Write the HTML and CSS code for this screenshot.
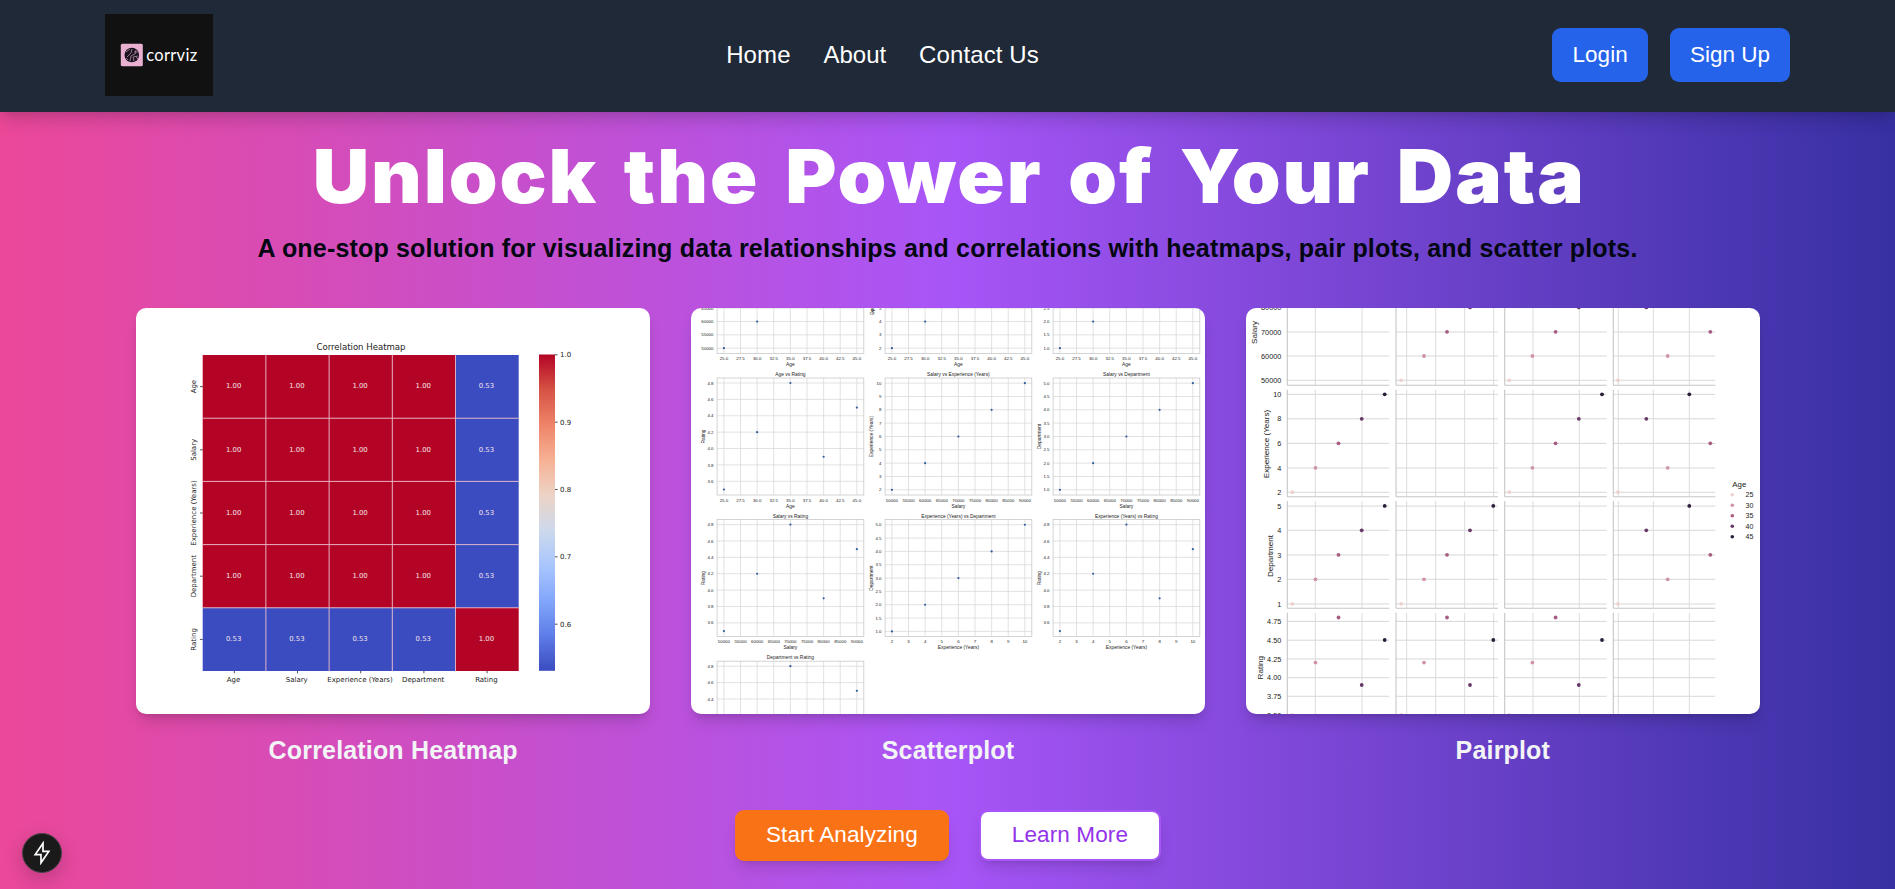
FILE: index.html
```html
<!DOCTYPE html>
<html lang="en">
<head>
<meta charset="utf-8">
<title>corrviz</title>
<link rel="stylesheet" href="styles.css">
</head>
<body>
<header class="header">
  <svg class="logo" viewBox="105 14 108 82">
    <rect x="105" y="14" width="108" height="82" fill="#111"/>
    <rect x="120.8" y="43.8" width="22" height="22.4" rx="1.5" fill="#eab0d2"/>
    <ellipse cx="131.8" cy="55" rx="7.3" ry="7.3" fill="#1c1520"/>
    <path d="M126 52l4-3M127 57l4-4 1-4M130 61l1-5 4-2 1-4M134 61l-1-4 5-1M136 57l2 2M128 60l-2-2M134 52l4 0" stroke="#b78aa8" stroke-width=".8" fill="none"/>
    <text class="logo-text" x="146.2" y="61.3" textLength="51">corrviz</text>
  </svg>
  <nav class="nav"><a class="nav-home">Home</a><a class="nav-about">About</a><a class="nav-contact">Contact Us</a></nav>
  <div class="auth"><a class="auth-btn">Login</a><a class="auth-btn">Sign Up</a></div>
</header>
<main class="hero">
  <h1 class="title">Unlock the Power of Your Data</h1>
  <p class="subtitle">A one-stop solution for visualizing data relationships and correlations with heatmaps, pair plots, and scatter plots.</p>
  <section class="cards">
    <figure class="card"><svg class="plot" id="heatmap" viewBox="136 308 514.33 406"></svg><figcaption class="caption">Correlation Heatmap</figcaption></figure>
    <figure class="card"><svg class="plot" id="scatter" viewBox="691.2 308 514.33 406"></svg><figcaption class="caption">Scatterplot</figcaption></figure>
    <figure class="card"><svg class="plot" id="pairplot" viewBox="1246 308 514.33 406"></svg><figcaption class="caption">Pairplot</figcaption></figure>
  </section>
  <div class="actions"><a class="btn btn-primary">Start Analyzing</a><a class="btn btn-secondary">Learn More</a></div>
</main>
<div class="badge">
  <svg width="20" height="24" viewBox="0 0 20 24"><path d="M11 2.2L3.2 13.6H9V21.8L16.8 10.4H11Z" fill="none" stroke="#fff" stroke-width="1.7" stroke-linejoin="miter"/></svg>
</div>
<script src="script.js"></script>
</body>
</html>
```
FILE: styles.css
```css
* { box-sizing: border-box; }
body {
  margin: 0;
  height: 889px;
  overflow: hidden;
  background: #fff;
  font-family: "Liberation Sans", Arial, sans-serif;
}
.header {
  position: relative;
  z-index: 1;
  height: 112px;
  padding: 0 105px;
  display: grid;
  grid-template-columns: 1fr auto 1fr;
  align-items: center;
  background: #1f2937;
  box-shadow: 0 10px 15px -3px rgba(0, 0, 0, .1), 0 4px 6px -4px rgba(0, 0, 0, .1), 0 8px 20px rgba(0, 0, 0, .07);
}
.logo { display: block; width: 108px; height: 82px; margin-top: -2px; }
.logo-text { font: 16.5px Lato, sans-serif; fill: #fff; }
.nav {
  display: flex;
  gap: 33px;
  padding: 0 0 2px;
  font-size: 24px;
  line-height: 36px;
  color: #fff;
  transform: translateX(-65px);
}
.nav-home { letter-spacing: .1px; }
.nav-about { letter-spacing: -.05px; }
.nav-contact { letter-spacing: .1px; }
.auth { display: flex; justify-content: flex-end; gap: 22px; padding-bottom: 2px; }
.auth-btn {
  height: 54px;
  padding: 0 20px 0 20.3px;
  border-radius: 9px;
  background: #2563eb;
  color: #fff;
  font-size: 22.5px;
  line-height: 53px;
}
.hero {
  height: 777px;
  padding-top: 22px;
  background: linear-gradient(to right, #ec4899, #a855f7, #3730a3);
  text-align: center;
}
.title {
  width: fit-content;
  margin: 0 auto;
  height: 85px;
  color: #fff;
  font: 900 74.5px/85px Inter, sans-serif;
  letter-spacing: 1.8px;
  word-spacing: 8px;
  white-space: nowrap;
  transform: translateX(2px) scaleX(1.05);
}
.subtitle {
  margin: 14px 0 0;
  height: 31px;
  color: #030712;
  font-size: 25px;
  line-height: 31px;
  font-weight: 700;
  letter-spacing: .18px;
  white-space: nowrap;
}
.cards {
  display: grid;
  grid-template-columns: repeat(3, 514.33px);
  justify-content: space-between;
  margin: 44px 135px 0 136px;
}
.card { margin: 0; }
.plot {
  display: block;
  width: 100%;
  height: 406px;
  border-radius: 10px;
  background: #fff;
  box-shadow: 0 10px 15px -3px rgba(0, 0, 0, .15), 0 4px 6px -4px rgba(0, 0, 0, .15);
}
.caption {
  margin-top: 18px;
  color: #f3f4f6;
  font-size: 25px;
  line-height: 36px;
  font-weight: 700;
  letter-spacing: .17px;
}
.actions { display: flex; justify-content: center; gap: 30px; margin-top: 42px; padding-left: 1px; }
.btn {
  height: 51px;
  padding: 0 31px;
  border-radius: 9px;
  font-size: 22.5px;
  line-height: 50px;
  letter-spacing: .12px;
  box-shadow: 0 10px 15px -3px rgba(0, 0, 0, .12), 0 4px 6px -4px rgba(0, 0, 0, .12);
}
.btn-primary { background: #f97316; color: #fff; }
.btn-secondary { background: #fff; border: 2px solid #a855f7; color: #9333ea; line-height: 46px; }
.badge {
  position: absolute;
  left: 22px;
  top: 833px;
  width: 40px;
  height: 40px;
  border-radius: 50%;
  border: 1.5px solid #4a4248;
  background: #1a1a1a;
  box-shadow: 0 6px 20px rgba(0, 0, 0, .2);
  display: flex;
  align-items: center;
  justify-content: center;
}
.heat-text { font-family: "DejaVu Sans", sans-serif; }
.plot-text { font-family: "Liberation Sans", Arial, sans-serif; }
```
FILE: script.js
```js
const NS = "http://www.w3.org/2000/svg";

function el(parent, tag, attrs, text) {
  const n = document.createElementNS(NS, tag);
  for (const k in attrs) n.setAttribute(k, attrs[k]);
  if (text !== undefined) n.textContent = text;
  parent.appendChild(n);
  return n;
}

function label(svg, cls, text, x, y, size, opt = {}) {
  if (y < 302 || y > 719) return;
  const a = { class: cls, x, y: y + size * 0.36, "font-size": size, "text-anchor": opt.anchor || "middle", fill: opt.fill || "#222" };
  if (opt.rotate) a.transform = `rotate(-90 ${x} ${y})`;
  if (opt.width) a.textLength = opt.width;
  el(svg, "text", a, text);
}

function line(svg, x1, y1, x2, y2, stroke, w) {
  el(svg, "line", { x1, y1, x2, y2, stroke, "stroke-width": w });
}

function drawHeatmap() {
  const s = document.getElementById("heatmap");
  const T = "heat-text";
  const names = ["Age", "Salary", "Experience (Years)", "Department", "Rating"];
  const x0 = 202.7, y0 = 355, c = 63.2;
  label(s, T, "Correlation Heatmap", 361, 347.2, 8.6, { width: 89 });
  for (let r = 0; r < 5; r++) for (let k = 0; k < 5; k++) {
    const high = (r === 4) === (k === 4);
    el(s, "rect", { x: x0 + k * c, y: y0 + r * c, width: c, height: c, fill: high ? "#b40426" : "#3b4cc0" });
    label(s, T, high ? "1.00" : "0.53", x0 + (k + .49) * c, y0 + (r + .49) * c, 6.9, { fill: "#f3e4ea" });
  }
  for (let i = 1; i < 5; i++) {
    line(s, x0 + i * c, y0, x0 + i * c, y0 + 5 * c, "#e6b8c6", .9);
    line(s, x0, y0 + i * c, x0 + 5 * c, y0 + i * c, "#e6b8c6", .9);
  }
  names.forEach((n, i) => {
    const m = (i + .5) * c;
    line(s, x0 + m, 671, x0 + m, 673.3, "#222", .8);
    line(s, 200, y0 + m, x0, y0 + m, "#222", .8);
    const w = i === 2 ? 65.5 : undefined;
    label(s, T, n, x0 + m - .7, 679.2, 7, { width: w });
    label(s, T, n, 193, y0 + m, 7, { width: w, rotate: true });
  });
  const g = el(s, "linearGradient", { id: "coolwarm", x1: 0, y1: 0, x2: 0, y2: 1 });
  ["#b40426", "#d65244", "#ee8468", "#f7b194", "#ecd3c5", "#cdd9ec", "#a9c6fd", "#82a6fb", "#5e7de7", "#3b4cc0"]
    .forEach((col, i) => el(g, "stop", { offset: i / 9, "stop-color": col }));
  el(s, "rect", { x: 539, y: 354.5, width: 16, height: 316.3, fill: "url(#coolwarm)" });
  ["1.0", "0.9", "0.8", "0.7", "0.6"].forEach((t, i) => {
    const y = 354.8 + i * 67.35;
    line(s, 555, y, 557.6, y, "#222", .8);
    label(s, T, t, 560, y, 7, { anchor: "start" });
  });
}

const range = (n, f) => Array.from({ length: n }, (_, i) => f(i));
const axes = {
  Age: { t: range(9, i => (25 + 2.5 * i).toFixed(1)), p: [0, 2, 4, 6, 8] },
  Salary: { t: range(9, i => String(50000 + 5000 * i)), p: [0, 2, 4, 6, 8] },
  "Experience (Years)": { t: range(9, i => String(2 + i)), p: [0, 2, 4, 6, 8] },
  Department: { t: range(9, i => (1 + .5 * i).toFixed(1)), p: [0, 2, 4, 6, 8] },
  Rating: { t: range(7, i => (3.6 + .2 * i).toFixed(1)), p: [-.5, 3, 6, 1.5, 4.5] }
};

function drawScatter() {
  const s = document.getElementById("scatter");
  const T = "plot-text";
  const cols = [717.3, 885.3, 1053.3];
  const plots = [
    ["Age", "Salary"], ["Age", "Experience (Years)"], ["Age", "Department"],
    ["Age", "Rating"], ["Salary", "Experience (Years)"], ["Salary", "Department"],
    ["Salary", "Rating"], ["Experience (Years)", "Department"], ["Experience (Years)", "Rating"],
    ["Department", "Rating"]
  ];
  plots.forEach(([xn, yn], i) => {
    const x0 = cols[i % 3];
    const top = 378 + (Math.floor(i / 3) - 1) * 141.6;
    const xa = axes[xn], ya = axes[yn];
    const px = v => x0 + 6.8 + v * 16.62;
    const rating = yn === "Rating";
    const py = v => rating ? top + 103.3 - v * 16.38 : top + 111.8 - v * 13.33;
    xa.t.forEach((t, k) => {
      line(s, px(k), top, px(k), top + 117, "#d6d6d6", .7);
      if (i < 9) label(s, T, t, px(k), top + 122.3, 4.4);
    });
    ya.t.forEach((t, k) => {
      line(s, x0, py(k), x0 + 146.7, py(k), "#d6d6d6", .7);
      label(s, T, t, x0 - 3.6, py(k), 4.4, { anchor: "end" });
    });
    el(s, "rect", { x: x0, y: top, width: 146.7, height: 117, fill: "none", stroke: "#c8c8c8", "stroke-width": .8 });
    label(s, T, `${xn} vs ${yn}`, x0 + 73.3, top - 3.8, 4.9);
    label(s, T, xn, x0 + 73.3, top + 128, 4.9);
    if (i === 1) label(s, T, yn, x0 - 13, 303, 4.9, { rotate: true, width: 24 });
    else if (i > 2 && i < 9) label(s, T, yn, x0 - 13.7, top + 58.5, 4.9, { rotate: true });
    xa.p.forEach((v, k) => el(s, "circle", { cx: px(v), cy: py(ya.p[k]), r: 1.1, fill: "#2f5d9e" }));
  });
}

function drawPairplot() {
  const s = document.getElementById("pairplot");
  const T = "plot-text";
  const hues = ["#edd1d1", "#d093a6", "#a85c7f", "#663a68", "#2a1e3b"];
  const cols = [
    { x: 1287.3, g: [1315.3, 1362], p: [1292.3, 1315.5, 1338.5, 1361.7, 1384.7] },
    { x: 1396, g: [1406.7, 1435.7, 1464.7, 1493.7], p: [1401, 1424, 1447, 1470, 1493.3] },
    { x: 1504.7, g: [1533, 1579.3], p: [1509.3, 1532.4, 1555.6, 1578.8, 1602] },
    { x: 1613.3, g: [1618.3, 1653.3, 1689.3], p: [1618, 1667.7, 1710.3, 1646.3, 1689.3] }
  ];
  const rows = [
    { n: "Salary", lx: 1254, ly: 332.5, top: 279, bot: 385.3, g: [380.3, 356, 332, 307.6], t: ["50000", "60000", "70000", "80000"], p: [380.3, 356, 331.8, 307.4, 283] },
    { n: "Experience (Years)", lx: 1266, ly: 444, top: 389.7, bot: 496.7, g: [492.3, 468, 443.4, 418.8, 394.4], t: ["2", "4", "6", "8", "10"], p: [492.2, 467.8, 443.3, 418.8, 394.3] },
    { n: "Department", lx: 1270.3, ly: 556, top: 501, bot: 608.3, g: [604, 579.3, 555, 530.3, 506.1], t: ["1", "2", "3", "4", "5"], p: [603.8, 579.3, 554.8, 530.3, 505.9] },
    { n: "Rating", lx: 1260, ly: 667.7, top: 612.7, bot: 720, g: [715, 696.3, 677.7, 659, 640.2, 621.4], t: ["3.50", "3.75", "4.00", "4.25", "4.50", "4.75"], p: [715, 662.6, 617.5, 685, 640] }
  ];
  rows.forEach((r, ri) => {
    label(s, T, r.n, r.lx, r.ly, 8.1, { rotate: true });
    r.t.forEach((t, k) => label(s, T, t, 1281.3, r.g[k], 7.3, { anchor: "end" }));
    cols.forEach((c, ci) => {
      r.g.forEach(y => line(s, c.x, y, c.x + 102, y, "#d4d4d4", .9));
      c.g.forEach(x => line(s, x, r.top, x, r.bot, "#d8d8d8", .9));
      line(s, c.x, r.top, c.x, r.bot, "#c6c6c6", 1.1);
      line(s, c.x, r.bot, c.x + 102, r.bot, "#c6c6c6", 1.1);
      if (ri === ci) return;
      c.p.forEach((x, k) => el(s, "circle", { cx: x, cy: r.p[k], r: 1.9, fill: hues[k] }));
    });
  });
  label(s, T, "Age", 1739.3, 484.3, 7.9);
  ["25", "30", "35", "40", "45"].forEach((t, k) => {
    const y = 494.8 + k * 10.5;
    el(s, "circle", { cx: 1732.3, cy: y, r: 1.8, fill: hues[k] });
    label(s, T, t, 1749.4, y, 7.1);
  });
}

drawHeatmap();
drawScatter();
drawPairplot();
```
